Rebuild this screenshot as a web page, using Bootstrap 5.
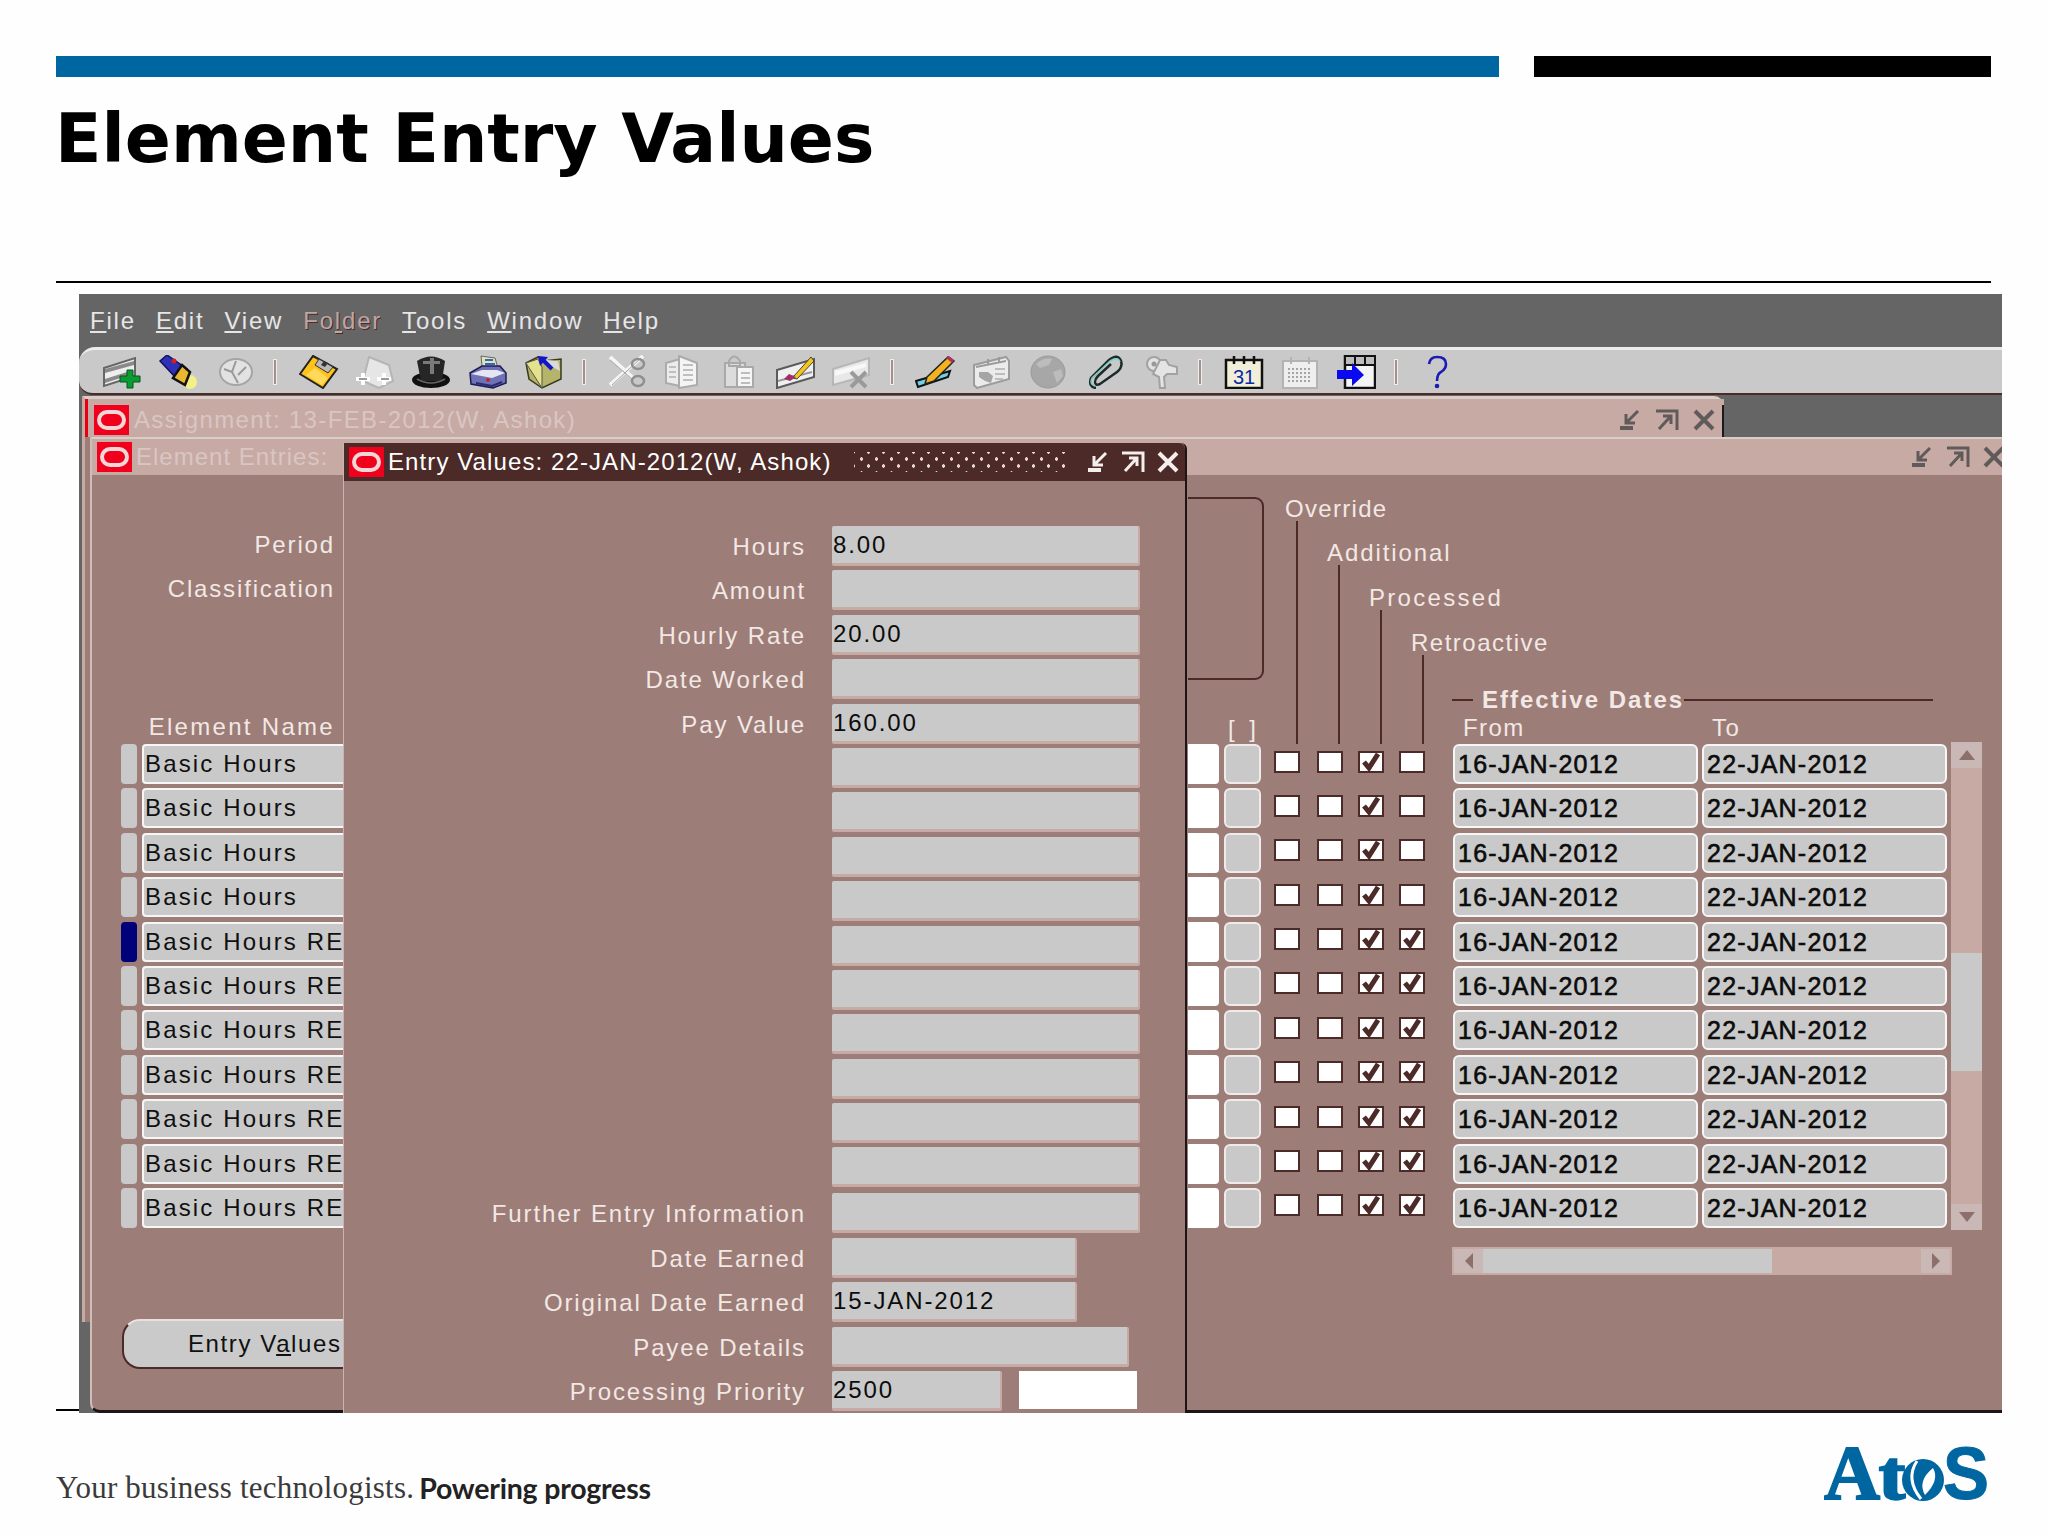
<!DOCTYPE html>
<html lang="en">
<head>
<meta charset="utf-8">
<title>Element Entry Values</title>
<link rel="stylesheet" href="https://cdn.jsdelivr.net/npm/bootstrap@5.3.0/dist/css/bootstrap.min.css">
<style>
html,body{margin:0;background:#fefefe}
.slide{width:2048px;height:1536px;overflow:hidden;padding:56px 57px 0 56px}
.bar-blue{width:1443px;height:21px;background:#0066a1}
.bar-black{width:457px;height:21px;background:#000}
.slide-title{font:700 68px/80px "DejaVu Sans",sans-serif;color:#000;margin:22px 0 0;height:182px;margin-left:-1px}
.slide-rule{height:2px;background:#000}
.app{width:1923px;height:1119px;margin:11px 0 0 23px;position:relative;z-index:2;background:#666566;overflow:hidden;font:400 24px/28px "Liberation Sans",sans-serif;color:#f2e8e5}
.menubar{height:53px;padding:13px 0 0 11px;gap:20px;color:#e6e6e6;letter-spacing:1.8px}
.menu-off{color:#bfa6a3;text-shadow:1px 1px 0 #4b2a28}
.toolbar{height:48px;background:#c9c9c9;border-top:3px solid #ececec;border-bottom:2px solid #4b2a28;border-top-left-radius:16px;border-bottom-left-radius:14px;padding-left:24px;gap:16.4px}
.toolbar svg{width:40px;height:34px;flex:none}
.tsep{width:4px;height:26px;flex:none;background:#a58f8b;border:1px solid #eee;margin:0 5px 0 1px}
.desk{height:1018px}
.win-back{left:3px;top:1px;width:1642px;height:926px;background:#9d7d77;border-left:3px solid #c8aaa5;border-top:3px solid #d8cdc9;border-top-right-radius:10px}
.win-back::after{content:"";position:absolute;right:0;top:6px;bottom:0;width:2px;background:#1a1a1a}
.win-main{left:11px;top:42px;width:1913px;height:976px;background:#9d7d77;border-left:2px solid #d0bdb9;border-bottom:3px solid #1c1416;border-bottom-left-radius:10px}
.tbar{height:38px;background:#c8aaa5;border-top:2px solid #d8cdc9;color:#d9c6c2;letter-spacing:1.35px}
.oralogo{width:35px;height:30px;flex:none}
.wctl{width:24px;height:22px;flex:none;color:#5f5b5b}
.win-back .tbar{height:38px;border-top:0;border-left:3px solid #e60012;padding:4px 0 0 6px;gap:5px}
.win-main .tbar{padding-left:5px;gap:4px}
.win-main .tbar span{letter-spacing:1px}
.nudge-r{margin-right:-3px}
.lcol{width:253px;flex:none;padding-top:56px}
.plab{height:44px;padding-right:10px;letter-spacing:1.85px;white-space:nowrap}
.elab{margin-top:94px;height:31px;padding-right:10px;letter-spacing:2.3px}
.lrow{height:40px;margin-bottom:4.4px;gap:5px;padding-left:29px}
.ltab{width:16px;height:40px;flex:none;background:#c9c9c9;border-radius:4px}
.ltab-on{background:#00007a}
.lname{flex:1;height:40px;background:#c9c9c9;border:2px solid #f6f6f6;border-right:0;border-radius:4px 0 0 4px;color:#101010;padding-left:1px;letter-spacing:2.15px;line-height:36px;white-space:nowrap;overflow:hidden}
.entrybtn{margin:91px 0 0 30px;width:223px;height:50px;background:#cacaca;border:0;border-left:2px solid #4b2a28;border-bottom:2px solid #4b2a28;border-top:2px solid #eadfdc;border-radius:18px 0 0 18px;font:inherit;color:#101010;text-align:left;padding:0 0 0 64px;letter-spacing:1.6px;white-space:nowrap;overflow:hidden}
.ccol{width:843px;flex:none}
.rcol{width:815px;flex:none}
.rhead{height:269px}
.hbox{width:76px;height:183px;margin-top:22px;border:2px solid #4b2a28;border-left:0;border-radius:0 9px 9px 0}
.brk{margin:36px 0 0 40px;letter-spacing:0;word-spacing:8px;line-height:26px}
.h0{width:108px}
.hc{width:42px;position:relative}
.hc1{padding-top:22px}.hc2{padding-top:66px}.hc3{padding-top:111px}.hc4{padding-top:156px}
.hc span{display:block;margin-left:-11px;white-space:nowrap;line-height:24px;letter-spacing:1.5px}
.hc2 span{letter-spacing:1.9px}.hc3 span{letter-spacing:2.3px}.hc1 span{letter-spacing:1.3px}
.hc i{display:block;flex:1;width:2px;background:#4b2a28}
.hd{width:481px;margin-left:-12px;padding-top:211px}
.eff{height:28px}
.eff b{letter-spacing:2px;font-weight:700;white-space:nowrap;margin-left:9px}
.eff1{width:21px;flex:none}
.effl{height:2px;background:#4b2a28}
.fromto{height:30px;padding-left:11px;letter-spacing:1.4px}
.from1{width:249px}
.rrow{height:40px;margin-bottom:4.4px}
.cwhite{width:31px;height:40px;background:#fff;border-radius:0 4px 4px 0;margin-right:5px}
.cgray{width:37px;height:40px;background:#c9c9c9;border:2px solid #f0ebea;border-radius:6px;margin-right:13px}
.cbx{width:26px;height:22px;background:#fff;border:2px solid #4b2a28;flex:none;margin-top:-5px;display:flex;align-items:center;justify-content:center}
.m18{margin-right:17px}.m16{margin-right:15px}.m15{margin-right:15px}.m28{margin-right:28px}
.cbx svg{width:22px;height:18px}
.dfield{width:245px;height:40px;background:#c9c9c9;border:2px solid #f6f6f6;border-radius:6px;color:#0c0c0c;font-size:25px;letter-spacing:1.25px;-webkit-text-stroke:.6px #0c0c0c;padding-left:3px;margin-right:4px;line-height:36px;white-space:nowrap}
.vscroll{width:31px;height:488px;margin:-2px 0 0 0;background:#c8aaa5;border-radius:14px 14px 12px 12px}
.vbtn{height:26px;background:#c9b8b5;display:flex;align-items:center;justify-content:center}
.vthumb{height:118px;background:#c9c9c9;margin-top:185px}
.hscroll{width:500px;height:28px;margin:15px 0 0 264px;background:#c8aaa5;padding:2px}
.hbtn{width:29px;height:24px;background:#c9b8b5;display:flex;align-items:center;justify-content:center}
.hthumb{width:289px;height:24px;background:#c9c9c9}
.modal-win{left:264px;top:48px;width:844px;height:970px;background:#9d7d77;border-left:1px solid #c9b4b0;border-right:2px solid #1c1416;border-top-right-radius:6px}
.mbar{height:38px;background:#4b2a28;color:#fff;padding-left:5px;gap:4px;letter-spacing:1.1px;white-space:nowrap;border-top-right-radius:6px}
.mdots{width:214px;height:20px;margin:0 7px 0 18px;flex:none;background-image:radial-gradient(#e6d6d2 1.6px,transparent 2px),radial-gradient(#e6d6d2 1.6px,transparent 2px);background-size:15px 14px;background-position:0 0,7px 7px}
.mctl{width:24px;height:24px;flex:none;color:#f4eeec;margin-left:7px}
.mbody{padding-top:45px}
.frow{height:40px;margin-bottom:4.4px}
.flab{width:462px;flex:none;text-align:right;letter-spacing:1.9px;white-space:nowrap;line-height:42px}
.fval{height:40px;width:308px;margin-left:26px;background:#c9c9c9;border-right:2px solid #c8aaa5;border-bottom:3px solid #c8aaa5;border-radius:2px;color:#0c0c0c;padding-left:1px;letter-spacing:1.9px;line-height:37px;flex:none}
.w245{width:245px}.w297{width:297px}.w170{width:170px}
.fwhite{width:118px;height:38px;margin-left:17px;background:#fff;flex:none}
.mt6{margin-top:6px}
.foot{margin-top:-4px;border-top:2px solid #000;height:127px;padding:60px 2px 0 0}
.tag1{font:400 31px/34px "Liberation Serif",serif;letter-spacing:.2px;color:#3a3a3a}
.tag2{font:700 28.5px/34px "Lato",sans-serif;letter-spacing:-.2px;color:#222;margin-left:5px}
.atos{width:170px;height:95px;margin:-44px -5px 0 0;flex:none}
</style>
</head>
<body>
<svg width="0" height="0" class="position-absolute">
<defs>
<symbol id="ora" viewBox="0 0 35 30"><rect width="35" height="30" fill="#f0001c"/><rect x="5" y="7" width="25" height="16" rx="8" fill="none" stroke="#f3d6d6" stroke-width="4"/></symbol>
<symbol id="mn" viewBox="0 0 24 22"><path d="M2 19h13" stroke="currentColor" stroke-width="4"/><path d="M20 2 9 13M8 5v9h9" fill="none" stroke="currentColor" stroke-width="3"/></symbol>
<symbol id="mx" viewBox="0 0 24 22"><path d="M1 2h21v19" fill="none" stroke="currentColor" stroke-width="3"/><path d="M4 20 15 8M8 7h8v8" fill="none" stroke="currentColor" stroke-width="3"/></symbol>
<symbol id="cl" viewBox="0 0 24 22"><path d="m3 2 18 18M21 2 3 20" fill="none" stroke="currentColor" stroke-width="4"/></symbol>
<symbol id="ck" viewBox="0 0 22 18"><path d="M4 9l5 6L18 1" fill="none" stroke="#4b2a28" stroke-width="5"/></symbol>
</defs>
</svg>
<div class="slide d-flex flex-column">
  <div class="d-flex justify-content-between"><div class="bar-blue"></div><div class="bar-black"></div></div>
  <h1 class="slide-title">Element Entry Values</h1>
  <div class="slide-rule"></div>
  <div class="app">
    <div class="menubar d-flex">
      <span><u>F</u>ile</span><span><u>E</u>dit</span><span><u>V</u>iew</span><span class="menu-off">Fo<u>l</u>der</span><span><u>T</u>ools</span><span><u>W</u>indow</span><span><u>H</u>elp</span>
    </div>
    <div class="toolbar d-flex align-items-center">
      <svg viewBox="0 0 40 34"><path d="M1 13 32 3v18L1 31z" fill="#eee" stroke="#666" stroke-width="2"/><path d="M2 14 31 6v4L2 18zM2 24l22-7v4L2 28z" fill="#8a8a8a"/><path d="M24 15h6v6h7v6h-7v6h-6v-6h-7v-6h7z" fill="#0a9c32" stroke="#06541f"/></svg>
      <svg viewBox="0 0 40 34"><circle cx="31" cy="27" r="7" fill="#f3f08a"/><path d="M1 6 8 0l20 14-9 11z" fill="#2f2fb8" stroke="#101060" stroke-width="1.5"/><circle cx="15" cy="6" r="2.5" fill="#d02020"/><path d="m23 10 8 7-5 13-12-7z" fill="#e9b830" stroke="#111" stroke-width="2.5"/></svg>
      <svg viewBox="0 0 40 34"><ellipse cx="20" cy="17" rx="16" ry="13" fill="#e2e2e2" stroke="#a5a5a5" stroke-width="2"/><path d="m20 6-4 11 6 11M8 14l8 3M30 12l-8 8" stroke="#9a9a9a" stroke-width="2" fill="none"/></svg>
      <div class="tsep"></div>
      <svg viewBox="0 0 40 34"><path d="M14 1 38 14 24 33 1 19z" fill="#ffc21a" stroke="#222" stroke-width="2"/><path d="m20 4 14 8-5 6-13-8z" fill="#b9b9b9" stroke="#333"/><path d="m25 6 4 2-3 4-4-2z" fill="#333"/><path d="m7 20 9-7 13 10-6 7z" fill="#ffd95a"/></svg>
      <svg viewBox="0 0 40 34"><path d="M14 2 34 10 38 26 24 33 8 26z" fill="#e6e6e6" stroke="#b5b5b5" stroke-width="2"/><path d="M1 24h14M8 18v12M22 24h14M29 18v12" stroke="#fff" stroke-width="4"/><path d="M4 24h8M26 24h8" stroke="#9a9a9a" stroke-width="2"/></svg>
      <svg viewBox="0 0 40 34"><ellipse cx="20" cy="25" rx="19" ry="8" fill="#111"/><path d="M6 6Q20-3 34 6l-3 20H10z" fill="#262626"/><path d="M19 3h4v16h-4zM12 6h17v3H12z" fill="#7a7a7a"/><path d="M6 24q14 8 28 0" stroke="#666" stroke-width="1.5" fill="none"/></svg>
      <svg viewBox="0 0 40 34"><path d="m13 1 14 2 5 17H15z" fill="#dfe3b8" stroke="#666"/><path d="M17 5h8M17 9h10" stroke="#3366bb" stroke-width="2"/><path d="M2 18 14 11h18l6 7v10l-13 5-22-4z" fill="#6e72b4" stroke="#1c1c55" stroke-width="1.5"/><path d="M3 19l21 4 13-5-8-3H14z" fill="#e6e6f2"/><circle cx="20" cy="25" r="1.8" fill="#d21818"/><path d="M8 28l16 3 10-4" stroke="#2a2a70" stroke-width="2" fill="none"/></svg>
      <svg viewBox="0 0 40 34"><path d="M2 8 14 2l5 4 18-2v20L18 33 5 24z" fill="#b5b46a" stroke="#3a3a1a" stroke-width="1.5"/><path d="M2 8l16 25V12L14 4z" fill="#e4e38c" stroke="#555"/><path d="M14 4l22 12-2-10z" fill="#d9d9d9"/><path d="m17 3 11 11" stroke="#1414c8" stroke-width="4"/><path d="m14 1 10 1-8 9z" fill="#1414c8"/></svg>
      <div class="tsep"></div>
      <svg viewBox="0 0 40 34"><path d="M3 2 27 24M36 1 3 30" stroke="#f4f4f4" stroke-width="4"/><path d="M3 5l22 19M34 3 5 30" stroke="#a2a2a2" stroke-width="1"/><ellipse cx="31" cy="9" rx="6" ry="5" fill="none" stroke="#8f8f8f" stroke-width="2.5"/><ellipse cx="31" cy="26" rx="6" ry="5" fill="none" stroke="#8f8f8f" stroke-width="2.5"/></svg>
      <svg viewBox="0 0 40 34"><path d="M3 8 17 4v27L3 28z" fill="#ececec" stroke="#ababab" stroke-width="2"/><path d="M16 1l18 7v22l-18 3z" fill="#f4f4f4" stroke="#ababab" stroke-width="2"/><path d="M20 10h10M20 15h10M20 20h10M20 25h10M6 12h7M6 17h7M6 22h7" stroke="#bfbfbf" stroke-width="2"/></svg>
      <svg viewBox="0 0 40 34"><path d="M5 8h20v24H5z" fill="#dcdcdc" stroke="#a9a9a9" stroke-width="2"/><path d="M9 6q5-9 11 0v5H9z" fill="none" stroke="#a9a9a9" stroke-width="2"/><path d="M17 12h16v20H17z" fill="#f5f5f5" stroke="#a9a9a9" stroke-width="2"/><path d="M21 18h9M21 23h9M21 28h9" stroke="#bdbdbd" stroke-width="2"/></svg>
      <svg viewBox="0 0 40 34"><path d="M1 15 38 4v18L1 33z" fill="#f0f0f0" stroke="#5a5a5a" stroke-width="2"/><path d="M2 26l34-9" stroke="#9a9a9a" stroke-width="2"/><path d="m13 22 5-1 17-19 3 4-17 18z" fill="#f3c520" stroke="#443" stroke-width="1"/><path d="m8 24 5-5 7 3-6 4z" fill="#a0306a"/></svg>
      <svg viewBox="0 0 40 34"><path d="M1 14 37 3v17L1 30z" fill="#e8e8e8" stroke="#b6b6b6" stroke-width="2"/><path d="M3 16 34 8v4L3 21z" fill="#f8f8f8"/><path d="m19 17 15 15M34 17 19 32" stroke="#9a9a9a" stroke-width="4"/></svg>
      <div class="tsep"></div>
      <svg viewBox="0 0 40 34"><path d="M1 26 35 16l-2 6-30 10z" fill="#6fd0e6" stroke="#111" stroke-width="2"/><path d="M12 22 33 2l6 4-20 20-9 3z" fill="#f3b21e" stroke="#222" stroke-width="1.5"/><path d="m31 3 6 5 2-3-5-4z" fill="#b03060"/></svg>
      <svg viewBox="0 0 40 34"><path d="M2 10 34 2l3 4v18L5 33 2 30z" fill="#ebebeb" stroke="#9c9c9c" stroke-width="2"/><path d="M4 12l30-6M16 9V4M27 7V2" stroke="#9c9c9c" stroke-width="2"/><path d="M7 17h9l5 4-2 7-6-2-6-4z" fill="#a5a5a5"/><path d="M23 14h10M23 19h10M23 24h8" stroke="#bdbdbd" stroke-width="2"/></svg>
      <svg viewBox="0 0 40 34"><ellipse cx="20" cy="17" rx="17" ry="16" fill="#a7a7a7" stroke="#9a9a9a"/><path d="M8 9q8-7 16-5l-3 6-9 3zM25 17l8-3 2 7-6 7z" fill="#bcbcbc"/></svg>
      <svg viewBox="0 0 40 34"><path d="M12 33q-8-1-5-10L25 5q9-7 12 1 2 6-4 11L16 29q-5 2-5-2 0-3 3-6L27 9" fill="none" stroke="#1e2a2a" stroke-width="2.5"/><path d="M11 31q-6-2-3-8L26 6q8-5 10 1" fill="none" stroke="#7fcfc6" stroke-width="1.5"/></svg>
      <svg viewBox="0 0 40 34"><circle cx="13" cy="9" r="7" fill="#e2e2e2" stroke="#a2a2a2" stroke-width="2"/><path d="M19 5h6l3 5 8 2v7H26l-3 3 1 11h-5l-1-11-6-3 3-6z" fill="#e4e4e4" stroke="#a2a2a2" stroke-width="2"/><circle cx="13" cy="9" r="2.5" fill="#999"/></svg>
      <div class="tsep"></div>
      <svg viewBox="0 0 40 34"><path d="M2 5h36v28H2z" fill="#f2efd8" stroke="#111" stroke-width="2.5"/><path d="M10 1v8M20 1v8M30 1v8" stroke="#111" stroke-width="2.5"/><text x="20" y="29" text-anchor="middle" font-family="Liberation Sans" font-size="20" fill="#0a2aa8">31</text></svg>
      <svg viewBox="0 0 40 34"><path d="M3 6h34v27H3z" fill="#efefef" stroke="#b3b3b3" stroke-width="2"/><path d="M11 2v7M29 2v7" stroke="#b3b3b3" stroke-width="2"/><path d="M8 14h24M8 18h24M8 22h24M8 26h24" stroke="#a5a5a5" stroke-width="2" stroke-dasharray="2 2"/></svg>
      <svg viewBox="0 0 40 34"><path d="M9 1h30v32H9z" fill="#f4f4f4" stroke="#111" stroke-width="2.5"/><path d="M9 1h30v9H9zM19 1v9M29 1v9" fill="#bdbdbd" stroke="#111" stroke-width="2"/><path d="M1 15h15V8l12 12-12 11v-7H1z" fill="#0a0af0"/></svg>
      <div class="tsep"></div>
      <svg viewBox="0 0 40 34"><path d="M10 9q1-7 8-7 9 0 9 7 0 5-5 8-4 2-4 9" fill="none" stroke="#1a1ab4" stroke-width="2.6"/><circle cx="18" cy="31" r="2.3" fill="#1a1ab4"/></svg>
    </div>
    <div class="desk position-relative">
      <div class="win-back position-absolute">
        <div class="tbar d-flex align-items-center"><svg class="oralogo"><use href="#ora"/></svg><span class="flex-grow-1">Assignment: 13-FEB-2012(W, Ashok)</span><svg class="wctl"><use href="#mn"/></svg><svg class="wctl ms-2"><use href="#mx"/></svg><svg class="wctl ms-2 me-2"><use href="#cl"/></svg></div>
      </div>
      <div class="win-main position-absolute d-flex flex-column">
        <div class="tbar d-flex align-items-center"><svg class="oralogo"><use href="#ora"/></svg><span class="flex-grow-1">Element Entries:</span><svg class="wctl"><use href="#mn"/></svg><svg class="wctl ms-2"><use href="#mx"/></svg><svg class="wctl ms-2 nudge-r"><use href="#cl"/></svg></div>
        <div class="d-flex flex-grow-1">
          <div class="lcol">
            <div class="plab text-end">Period</div>
            <div class="plab text-end">Classification</div>
            <div class="elab text-end">Element Name</div>
            <div class="lrow d-flex"><div class="ltab"></div><div class="lname">Basic Hours</div></div>
            <div class="lrow d-flex"><div class="ltab"></div><div class="lname">Basic Hours</div></div>
            <div class="lrow d-flex"><div class="ltab"></div><div class="lname">Basic Hours</div></div>
            <div class="lrow d-flex"><div class="ltab"></div><div class="lname">Basic Hours</div></div>
            <div class="lrow d-flex"><div class="ltab ltab-on"></div><div class="lname">Basic Hours RE</div></div>
            <div class="lrow d-flex"><div class="ltab"></div><div class="lname">Basic Hours RE</div></div>
            <div class="lrow d-flex"><div class="ltab"></div><div class="lname">Basic Hours RE</div></div>
            <div class="lrow d-flex"><div class="ltab"></div><div class="lname">Basic Hours RE</div></div>
            <div class="lrow d-flex"><div class="ltab"></div><div class="lname">Basic Hours RE</div></div>
            <div class="lrow d-flex"><div class="ltab"></div><div class="lname">Basic Hours RE</div></div>
            <div class="lrow d-flex"><div class="ltab"></div><div class="lname">Basic Hours RE</div></div>
            <button type="button" class="entrybtn d-block">Entry V<u>a</u>lues</button>
          </div>
          <div class="ccol"></div>
          <div class="rcol">
            <div class="rhead d-flex">
              <div class="h0"><div class="hbox"></div><div class="brk">[ ]</div></div>
              <div class="hc hc1 d-flex flex-column"><span>Override</span><i></i></div>
              <div class="hc hc2 d-flex flex-column"><span>Additional</span><i></i></div>
              <div class="hc hc3 d-flex flex-column"><span>Processed</span><i></i></div>
              <div class="hc hc4 d-flex flex-column"><span>Retroactive</span><i></i></div>
              <div class="hd">
                <div class="eff d-flex align-items-center"><div class="effl eff1"></div><b>Effective Dates</b><div class="effl flex-grow-1"></div></div>
                <div class="fromto d-flex"><span class="from1">From</span><span>To</span></div>
              </div>
            </div>
            <div class="d-flex">
              <div>
                <div class="rrow d-flex align-items-center"><div class="cwhite"></div><div class="cgray"></div><div class="cbx m18"></div><div class="cbx m16"></div><div class="cbx m15"><svg><use href="#ck"/></svg></div><div class="cbx m28"></div><div class="dfield">16-JAN-2012</div><div class="dfield">22-JAN-2012</div></div>
                <div class="rrow d-flex align-items-center"><div class="cwhite"></div><div class="cgray"></div><div class="cbx m18"></div><div class="cbx m16"></div><div class="cbx m15"><svg><use href="#ck"/></svg></div><div class="cbx m28"></div><div class="dfield">16-JAN-2012</div><div class="dfield">22-JAN-2012</div></div>
                <div class="rrow d-flex align-items-center"><div class="cwhite"></div><div class="cgray"></div><div class="cbx m18"></div><div class="cbx m16"></div><div class="cbx m15"><svg><use href="#ck"/></svg></div><div class="cbx m28"></div><div class="dfield">16-JAN-2012</div><div class="dfield">22-JAN-2012</div></div>
                <div class="rrow d-flex align-items-center"><div class="cwhite"></div><div class="cgray"></div><div class="cbx m18"></div><div class="cbx m16"></div><div class="cbx m15"><svg><use href="#ck"/></svg></div><div class="cbx m28"></div><div class="dfield">16-JAN-2012</div><div class="dfield">22-JAN-2012</div></div>
                <div class="rrow d-flex align-items-center"><div class="cwhite"></div><div class="cgray"></div><div class="cbx m18"></div><div class="cbx m16"></div><div class="cbx m15"><svg><use href="#ck"/></svg></div><div class="cbx m28"><svg><use href="#ck"/></svg></div><div class="dfield">16-JAN-2012</div><div class="dfield">22-JAN-2012</div></div>
                <div class="rrow d-flex align-items-center"><div class="cwhite"></div><div class="cgray"></div><div class="cbx m18"></div><div class="cbx m16"></div><div class="cbx m15"><svg><use href="#ck"/></svg></div><div class="cbx m28"><svg><use href="#ck"/></svg></div><div class="dfield">16-JAN-2012</div><div class="dfield">22-JAN-2012</div></div>
                <div class="rrow d-flex align-items-center"><div class="cwhite"></div><div class="cgray"></div><div class="cbx m18"></div><div class="cbx m16"></div><div class="cbx m15"><svg><use href="#ck"/></svg></div><div class="cbx m28"><svg><use href="#ck"/></svg></div><div class="dfield">16-JAN-2012</div><div class="dfield">22-JAN-2012</div></div>
                <div class="rrow d-flex align-items-center"><div class="cwhite"></div><div class="cgray"></div><div class="cbx m18"></div><div class="cbx m16"></div><div class="cbx m15"><svg><use href="#ck"/></svg></div><div class="cbx m28"><svg><use href="#ck"/></svg></div><div class="dfield">16-JAN-2012</div><div class="dfield">22-JAN-2012</div></div>
                <div class="rrow d-flex align-items-center"><div class="cwhite"></div><div class="cgray"></div><div class="cbx m18"></div><div class="cbx m16"></div><div class="cbx m15"><svg><use href="#ck"/></svg></div><div class="cbx m28"><svg><use href="#ck"/></svg></div><div class="dfield">16-JAN-2012</div><div class="dfield">22-JAN-2012</div></div>
                <div class="rrow d-flex align-items-center"><div class="cwhite"></div><div class="cgray"></div><div class="cbx m18"></div><div class="cbx m16"></div><div class="cbx m15"><svg><use href="#ck"/></svg></div><div class="cbx m28"><svg><use href="#ck"/></svg></div><div class="dfield">16-JAN-2012</div><div class="dfield">22-JAN-2012</div></div>
                <div class="rrow d-flex align-items-center"><div class="cwhite"></div><div class="cgray"></div><div class="cbx m18"></div><div class="cbx m16"></div><div class="cbx m15"><svg><use href="#ck"/></svg></div><div class="cbx m28"><svg><use href="#ck"/></svg></div><div class="dfield">16-JAN-2012</div><div class="dfield">22-JAN-2012</div></div>
              </div>
              <div class="vscroll d-flex flex-column justify-content-between">
                <div>
                  <div class="vbtn"><svg width="16" height="10" viewBox="0 0 16 10"><path d="M0 10h16L8 0z" fill="#8d6f6b"/></svg></div>
                  <div class="vthumb"></div>
                </div>
                <div class="vbtn"><svg width="16" height="10" viewBox="0 0 16 10"><path d="M0 0h16L8 10z" fill="#8d6f6b"/></svg></div>
              </div>
            </div>
            <div class="hscroll d-flex">
              <div class="hbtn"><svg width="8" height="16" viewBox="0 0 8 16"><path d="M8 0v16L0 8z" fill="#8d6f6b"/></svg></div>
              <div class="hthumb"></div>
              <div class="flex-grow-1"></div>
              <div class="hbtn"><svg width="8" height="16" viewBox="0 0 8 16"><path d="M0 0v16l8-8z" fill="#8d6f6b"/></svg></div>
            </div>
          </div>
        </div>
      </div>
      <div class="modal-win position-absolute">
        <div class="mbar d-flex align-items-center"><svg class="oralogo"><use href="#ora"/></svg><span>Entry Values: 22-JAN-2012(W, Ashok)</span><div class="mdots"></div><svg class="mctl"><use href="#mn"/></svg><svg class="mctl"><use href="#mx"/></svg><svg class="mctl"><use href="#cl"/></svg></div>
        <div class="mbody">
          <div class="frow d-flex"><div class="flab">Hours</div><div class="fval">8.00</div></div>
          <div class="frow d-flex"><div class="flab">Amount</div><div class="fval"></div></div>
          <div class="frow d-flex"><div class="flab">Hourly Rate</div><div class="fval">20.00</div></div>
          <div class="frow d-flex"><div class="flab">Date Worked</div><div class="fval"></div></div>
          <div class="frow d-flex"><div class="flab">Pay Value</div><div class="fval">160.00</div></div>
          <div class="frow d-flex"><div class="flab"></div><div class="fval"></div></div>
          <div class="frow d-flex"><div class="flab"></div><div class="fval"></div></div>
          <div class="frow d-flex"><div class="flab"></div><div class="fval"></div></div>
          <div class="frow d-flex"><div class="flab"></div><div class="fval"></div></div>
          <div class="frow d-flex"><div class="flab"></div><div class="fval"></div></div>
          <div class="frow d-flex"><div class="flab"></div><div class="fval"></div></div>
          <div class="frow d-flex"><div class="flab"></div><div class="fval"></div></div>
          <div class="frow d-flex"><div class="flab"></div><div class="fval"></div></div>
          <div class="frow d-flex"><div class="flab"></div><div class="fval"></div></div>
          <div class="frow d-flex"><div class="flab"></div><div class="fval"></div></div>
          <div class="frow d-flex mt6"><div class="flab">Further Entry Information</div><div class="fval"></div></div>
          <div class="frow d-flex"><div class="flab">Date Earned</div><div class="fval w245"></div></div>
          <div class="frow d-flex"><div class="flab">Original Date Earned</div><div class="fval w245">15-JAN-2012</div></div>
          <div class="frow d-flex"><div class="flab">Payee Details</div><div class="fval w297"></div></div>
          <div class="frow d-flex"><div class="flab">Processing Priority</div><div class="fval w170">2500</div><div class="fwhite"></div></div>
        </div>
      </div>
    </div>
  </div>
  <div class="foot d-flex justify-content-between">
    <div class="d-flex"><span class="tag1">Your business technologists.</span><span class="tag2">Powering progress</span></div>
    <svg class="atos" viewBox="0 -20 170 95" role="img" aria-label="Atos">
      <text x="0" y="52" font-family="Liberation Serif" font-weight="700" font-size="78" fill="#0066a1" stroke="#0066a1" stroke-width="2" textLength="56" lengthAdjust="spacingAndGlyphs">A</text>
      <text x="55" y="52" font-family="Liberation Serif" font-weight="700" font-size="70" fill="#0066a1" stroke="#0066a1" stroke-width="2.5" textLength="26" lengthAdjust="spacingAndGlyphs">t</text>
      <circle cx="99" cy="33" r="21" fill="#0066a1"/>
      <path d="M93 14q-12 18 4 38" fill="none" stroke="#fff" stroke-width="3"/>
      <path d="M101 48q-8-14 8-27 7 12-8 27z" fill="#fff"/>
      <text x="119" y="52" font-family="Liberation Sans" font-weight="700" font-size="74" fill="#0066a1" stroke="#0066a1" textLength="46" lengthAdjust="spacingAndGlyphs">S</text>
    </svg>
  </div>
</div>
</body>
</html>
